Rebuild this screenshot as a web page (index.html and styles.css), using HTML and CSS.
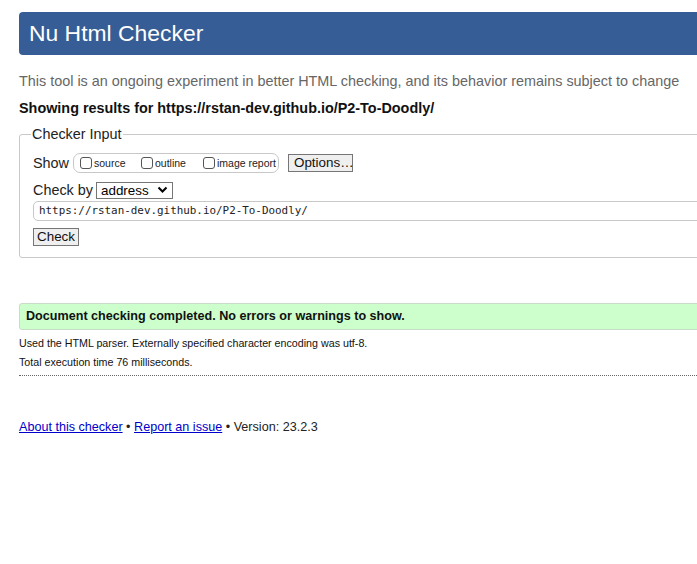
FILE: index.html
```html
<!DOCTYPE html>
<html>
<head>
<meta charset="utf-8">
<title>Nu Html Checker</title>
<link rel="stylesheet" href="styles.css">
</head>
<body>
<div class="page">
  <h1 class="banner">Nu Html Checker</h1>
  <p class="intro">This tool is an ongoing experiment in better HTML checking, and its behavior remains subject to change</p>
  <p class="showing">Showing results for https://rstan-dev.github.io/P2-To-Doodly/</p>
  <fieldset class="input-box">
    <legend>Checker Input</legend>
    <div class="row">
      <span class="lbl">Show</span>
      <span class="opts">
        <label class="opt opt-source"><span class="cb"></span>source</label>
        <label class="opt opt-outline"><span class="cb"></span>outline</label>
        <label class="opt"><span class="cb"></span>image report</label>
      </span>
      <span class="btn btn-options">Options…</span>
    </div>
    <div class="row row-check">
      <span class="lbl">Check by</span>
      <span class="select">address<svg width="11" height="8" viewBox="0 0 11 8"><path d="M1.5 1.5 L5.5 5.5 L9.5 1.5" fill="none" stroke="#000" stroke-width="2"/></svg></span>
    </div>
    <div class="url">https://rstan-dev.github.io/P2-To-Doodly/</div>
    <span class="btn btn-check">Check</span>
  </fieldset>
  <div class="success">Document checking completed. No errors or warnings to show.</div>
  <p class="info">Used the HTML parser. Externally specified character encoding was utf-8.</p>
  <p class="info info-last">Total execution time 76 milliseconds.</p>
  <p class="footer"><a href="#">About this checker</a> • <a href="#">Report an issue</a> • Version: 23.2.3</p>
</div>
</body>
</html>
```
FILE: styles.css
```css
html { overflow: hidden; }
body {
  margin: 0;
  padding: 12px 0 0 19px;
  font-family: "Liberation Sans", Arial, sans-serif;
  color: #000;
  background: #fff;
}
.page { width: 760px; }
.banner {
  margin: 0;
  height: 43px;
  box-sizing: border-box;
  padding: 8px 10px 0;
  background: #365d95;
  color: #fff;
  font-size: 22.9px;
  font-weight: normal;
  line-height: 26px;
  border-radius: 4px 0 0 4px;
}
.intro {
  margin: 17px 0 0;
  font-size: 14.4px;
  line-height: 18px;
  color: #666;
}
.showing {
  margin: 9px 0 0;
  font-size: 14.4px;
  line-height: 18px;
  font-weight: bold;
  color: #111;
}
.input-box {
  margin: 9px 0 0;
  padding: 10px 13px 11px;
  border: 1px solid #c8c8c8;
  border-radius: 3px;
  min-width: 0;
}
.input-box legend {
  font-size: 14.4px;
  padding: 0 1px;
  margin-left: -2px;
  color: #222;
}
.row {
  display: flex;
  align-items: center;
  height: 22px;
  font-size: 14.4px;
}
.lbl { color: #222; }
.opts {
  display: inline-flex;
  align-items: center;
  margin-left: 4px;
  height: 18px;
  padding: 0 0 0 6px;
  border: 1px solid #c8c8c8;
  border-radius: 7px;
  width: 198px;
  box-sizing: content-box;
}
.opt {
  display: inline-flex;
  align-items: center;
  font-size: 10.5px;
  color: #222;
}
.opt-source { width: 61px; }
.opt-outline { width: 62px; }
.cb {
  width: 12px;
  height: 12px;
  border: 1px solid #555;
  border-radius: 3px;
  margin-right: 2px;
  box-sizing: border-box;
}
.btn {
  display: inline-block;
  box-sizing: border-box;
  border: 1px solid #767676;
  background: #efefef;
  font-size: 13.4px;
  color: #111;
}
.btn-options {
  margin-left: 9px;
  padding: 0 5px;
  width: 65px;
  height: 18px;
  line-height: 16px;
}
.row-check { margin-top: 5px; }
.select {
  display: inline-flex;
  align-items: center;
  justify-content: space-between;
  margin-left: 3px;
  width: 77px;
  height: 17px;
  box-sizing: border-box;
  padding: 0 4px 0 4px;
  border: 1px solid #767676;
  font-size: 13.4px;
  color: #000;
}
.url {
  margin-top: 0;
  height: 20px;
  box-sizing: border-box;
  padding: 0 5px;
  border: 1px solid #c8c8c8;
  border-radius: 5px;
  font-family: "DejaVu Sans Mono", monospace;
  font-size: 10.9px;
  line-height: 18px;
  color: #222;
}
.btn-check {
  display: block;
  margin-top: 7px;
  width: 46px;
  height: 18px;
  line-height: 16px;
  text-align: center;
}
.success {
  margin-top: 45px;
  height: 27px;
  box-sizing: border-box;
  padding: 4px 6px;
  background: #ccffcc;
  border: 1px solid #c8dcc8;
  border-radius: 3px 0 0 3px;
  font-size: 12.6px;
  font-weight: bold;
  line-height: 17px;
  color: #111;
}
.info {
  margin: 7px 0 0;
  font-size: 10.7px;
  line-height: 13px;
  color: #111;
}
.info-last {
  margin-top: 6px;
  padding-bottom: 6px;
  border-bottom: 1px dotted #666;
}
.footer {
  margin: 43px 0 0;
  font-size: 12.6px;
  line-height: 16px;
  color: #222;
}
.footer a { color: #00c; text-decoration: underline; }
```
